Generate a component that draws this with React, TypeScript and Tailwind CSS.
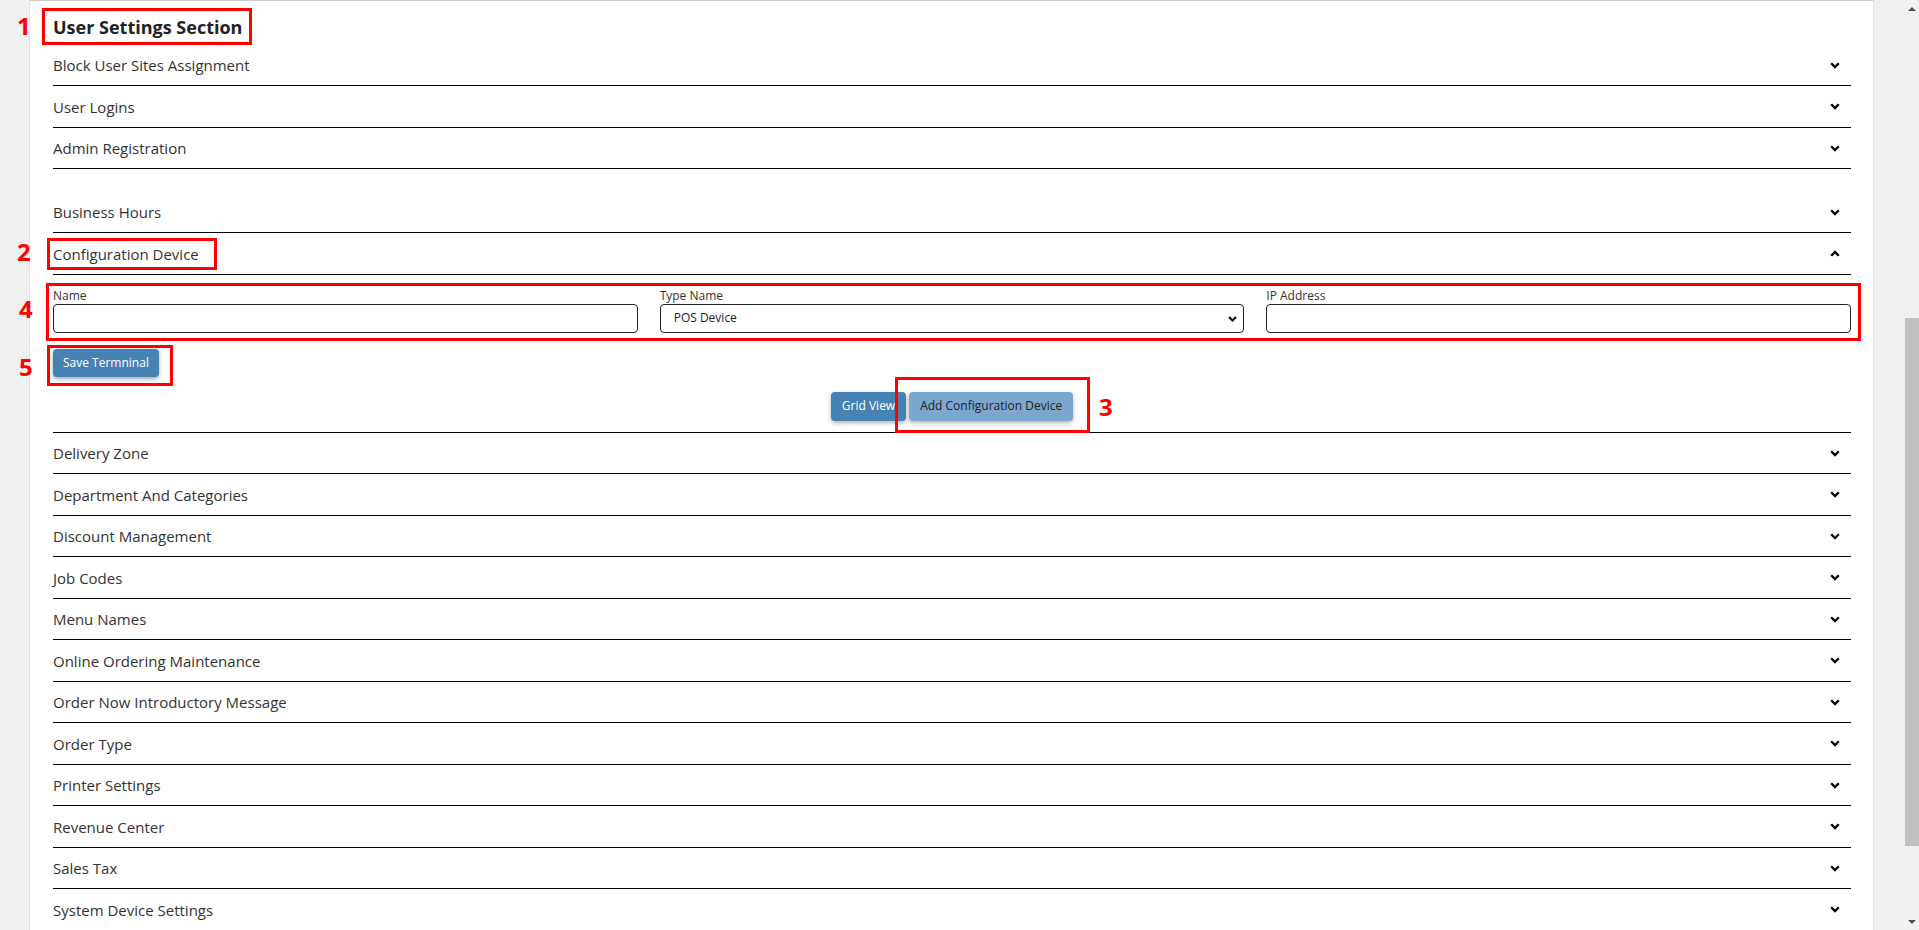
import React from 'react';

const topRows = ['Block User Sites Assignment', 'User Logins', 'Admin Registration'];

const bottomRows = [
  'Delivery Zone',
  'Department And Categories',
  'Discount Management',
  'Job Codes',
  'Menu Names',
  'Online Ordering Maintenance',
  'Order Now Introductory Message',
  'Order Type',
  'Printer Settings',
  'Revenue Center',
  'Sales Tax',
  'System Device Settings',
];

const Chevron: React.FC<{ up?: boolean }> = ({ up }) => (
  <svg width="10" height="7" viewBox="0 0 10 7" className={up ? 'rotate-180' : ''}>
    <polyline points="1.2,1.2 5,5 8.8,1.2" fill="none" stroke="#000" strokeWidth="2.3" />
  </svg>
);

const Row: React.FC<{ title: string; up?: boolean }> = ({ title, up }) => (
  <div className="h-[41.5px] border-b border-black flex items-center justify-between pt-[1px] pr-[11px]">
    <span className="text-[15px] text-[#333]">{title}</span>
    <Chevron up={up} />
  </div>
);

// red annotation marks drawn over the screenshot
const Mark: React.FC<{ className: string }> = ({ className }) => (
  <div className={`absolute border-[3px] border-[#ff0000] pointer-events-none ${className}`} />
);

const Num: React.FC<{ n: string; className: string }> = ({ n, className }) => (
  <span className={`absolute text-[24px] leading-[24px] font-bold text-[#ff0000] ${className}`}>{n}</span>
);

const App: React.FC = () => {
  return (
    <div className="relative h-[930px] w-[1919px] flex overflow-hidden bg-[#f0f0f0] font-['Open_Sans',sans-serif]">
      {/* left gutter */}
      <div className="w-[30px] shrink-0 bg-[#f0f0f0] border-r border-[#e2e2e2]" />

      {/* main panel */}
      <div className="w-[1843px] shrink-0 bg-white border-t border-[#cfcfcf] pl-[23px] pr-[22px]">
        <div className="h-[43.5px] pt-[14px]">
          <h2 className="text-[18px] leading-[24px] font-bold text-[#222]">User Settings Section</h2>
        </div>

        {topRows.map((r) => (
          <Row key={r} title={r} />
        ))}
        <div className="h-[22.5px]" />
        <Row title="Business Hours" />
        <Row title="Configuration Device" up />

        {/* expanded: configuration device form */}
        <div className="border-b border-black pt-[13px] pb-[11px]">
          <div className="grid grid-cols-3 gap-[22px]">
            <div>
              <label className="block text-[12px] leading-[16px] text-[#333]">Name</label>
              <input className="w-full h-[29px] border border-[#222] rounded-[4px] px-3 text-[12px]" />
            </div>
            <div>
              <label className="block text-[12px] leading-[16px] text-[#333]">Type Name</label>
              <div className="relative">
                <select className="w-full h-[29px] border border-[#222] rounded-[4px] pl-[13px] text-[12px] text-[#222] bg-white appearance-none">
                  <option>POS Device</option>
                </select>
                <div className="absolute right-[7px] top-[12px]">
                  <svg width="9" height="6" viewBox="0 0 9 6">
                    <polyline points="1,1 4.5,4.5 8,1" fill="none" stroke="#000" strokeWidth="2" />
                  </svg>
                </div>
              </div>
            </div>
            <div>
              <label className="block text-[12px] leading-[16px] text-[#333]">IP Address</label>
              <input className="w-full h-[29px] border border-[#222] rounded-[4px] px-3 text-[12px]" />
            </div>
          </div>

          <button className="mt-[16px] h-[28px] px-[10px] rounded-[4px] bg-[#4682b4] text-white text-[12px] shadow-[0_2px_4px_rgba(0,0,0,0.35)]">
            Save Termninal
          </button>

          <div className="mt-[15px] flex justify-center gap-[3px]">
            <button className="h-[29px] px-[11px] rounded-[4px] bg-[#4682b4] text-white text-[12px] shadow-[0_2px_4px_rgba(0,0,0,0.3)]">
              Grid View
            </button>
            <button className="h-[29px] px-[11px] rounded-[4px] bg-[#7ba7cf] text-[#222] text-[12px] shadow-[0_2px_4px_rgba(0,0,0,0.3)]">
              Add Configuration Device
            </button>
          </div>
        </div>

        {bottomRows.map((r) => (
          <Row key={r} title={r} />
        ))}
      </div>

      {/* right gutter */}
      <div className="w-[32px] shrink-0 bg-[#f0f0f0] border-l border-[#e2e2e2]" />

      {/* scrollbar */}
      <div className="w-[14px] shrink-0 bg-[#f1f1f1] flex flex-col items-center">
        <div className="h-[17px] flex items-center justify-center">
          <div className="w-0 h-0 border-l-[4px] border-r-[4px] border-b-[4px] border-l-transparent border-r-transparent border-b-[#505050]" />
        </div>
        <div className="h-[301px]" />
        <div className="w-full h-[528px] bg-[#c1c1c1]" />
        <div className="flex-1" />
        <div className="h-[17px] flex items-center justify-center">
          <div className="w-0 h-0 border-l-[4px] border-r-[4px] border-t-[4px] border-l-transparent border-r-transparent border-t-[#505050]" />
        </div>
      </div>

      {/* annotations */}
      <Mark className="left-[42px] top-[8px] w-[210px] h-[37px]" />
      <Mark className="left-[47px] top-[238px] w-[170px] h-[32px]" />
      <Mark className="left-[46px] top-[283px] w-[1815px] h-[58px]" />
      <Mark className="left-[47px] top-[345px] w-[126px] h-[41px]" />
      <Mark className="left-[895px] top-[377px] w-[195px] h-[56px]" />
      <Num n="1" className="left-[17px] top-[14px]" />
      <Num n="2" className="left-[17px] top-[240px]" />
      <Num n="4" className="left-[19px] top-[297px]" />
      <Num n="5" className="left-[19px] top-[355px]" />
      <Num n="3" className="left-[1099px] top-[395px]" />
    </div>
  );
};

export default App;
